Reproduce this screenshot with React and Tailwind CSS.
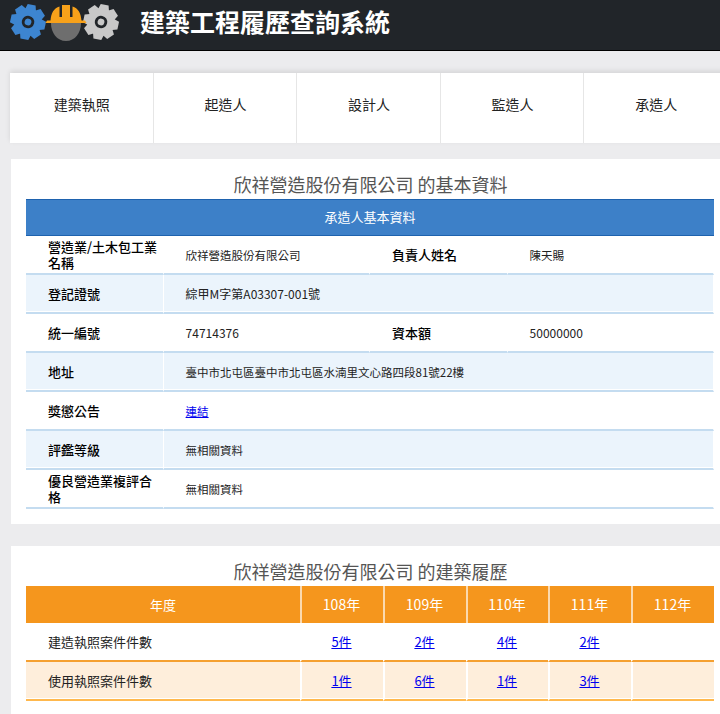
const F = "font-['Microsoft_JhengHei','Noto_Sans_CJK_TC','Noto_Sans',sans-serif]";

function Gear({ color, x }) {
  const teeth = [0, 45, 90, 135, 180, 225, 270, 315];
  return (
    <g transform={`translate(${x} 22) rotate(12)`}>
      {teeth.map((a) => (
        <path key={a} d="M-4 -17.6 L4 -17.6 L6.2 -10 L-6.2 -10 Z" fill={color} transform={`rotate(${a})`} />
      ))}
      <circle r="10" fill="none" stroke={color} strokeWidth="7.5" />
      <circle r="3.4" fill={color} />
    </g>
  );
}

function Logo() {
  return (
    <svg width="120" height="44" viewBox="0 0 120 44" className="block">
      <Gear color="#3d85d0" x="28" />
      <Gear color="#c8c8c8" x="101" />
      <path d="M51 23 h30 c0 10 -6 18 -15 18 s-15 -8 -15 -18 Z" fill="#6e6e6e" />
      <path d="M50.5 21 C51 13 54 8 59.5 6.5 L59.5 17 L62 17 L62 5 L70 5 L70 17 L72.5 17 L72.5 6.5 C78 8 81 13 81.5 21 Z" fill="#f7a11a" />
      <path d="M47 20.5 h38 l1.5 2.5 h-41 Z" fill="#f7a11a" />
    </svg>
  );
}

const blueRows = [
  { l: "營造業/土木包工業名稱", v: "欣祥營造股份有限公司", l2: "負責人姓名", v2: "陳天賜" },
  { l: "登記證號", v: "綜甲M字第A03307-001號", span: true, big: true },
  { l: "統一編號", v: "74714376", l2: "資本額", v2: "50000000", big: true },
  { l: "地址", v: "臺中市北屯區臺中市北屯區水湳里文心路四段81號22樓", span: true },
  { l: "獎懲公告", link: "連結", span: true },
  { l: "評鑑等級", v: "無相關資料", span: true },
  { l: "優良營造業複評合格", v: "無相關資料", span: true },
];

const years = ["108年", "109年", "110年", "111年", "112年"];
const caseRows = [
  { l: "建造執照案件件數", c: ["5件", "2件", "4件", "2件", ""] },
  { l: "使用執照案件件數", c: ["1件", "6件", "1件", "3件", ""] },
];

const nav = ["建築執照", "起造人", "設計人", "監造人", "承造人"];

function Label({ children, tint }) {
  return (
    <td className={`pl-[22px] pr-[4px] text-[13px] leading-[16px] font-medium text-black border-r border-r-white border-b-2 border-b-[#c4dcf0] ${tint ? "shadow-[inset_0_-1px_0_#ffffff]" : ""}`}>
      {children}
    </td>
  );
}

function Value({ children, span, big, tint }) {
  return (
    <td colSpan={span ? 3 : 1} className={`pl-[22px] pr-[4px] leading-[16px] text-[#222] border-r border-r-white border-b-2 border-b-[#c4dcf0] ${big ? "text-[12px]" : "text-[11.5px]"} ${tint ? "shadow-[inset_0_-1px_0_#ffffff]" : ""}`}>
      {children}
    </td>
  );
}

export default function App() {
  return (
    <div className={`h-[714px] w-[720px] overflow-hidden bg-[#ececee] ${F}`}>
      <header className="flex h-[51px] items-start overflow-hidden border-b border-b-black bg-[#212529]">
        <div className="w-[120px] shrink-0">
          <Logo />
        </div>
        <h1 className="ml-[20px] mt-[5px] text-[25px] leading-[32px] font-bold text-white">建築工程履歷查詢系統</h1>
      </header>

      <nav className="ml-[10px] mt-[22px] flex h-[70px] w-[718px] bg-white shadow-[0_-2px_5px_rgba(0,0,0,0.1)]">
        {nav.map((n) => (
          <div key={n} className="flex w-[143.6px] shrink-0 items-center justify-center border-r border-r-[#e6e6e6] pb-[8px] pl-[1px] text-[14px] text-[#222]">
            {n}
          </div>
        ))}
      </nav>

      <section className="ml-[11px] mt-[16px] h-[365px] bg-white pl-[15px] pr-[6px]">
        <h2 className="h-[40px] pt-[13px] pl-[1px] text-center text-[18px] leading-[24px] text-[#555]">欣祥營造股份有限公司 的基本資料</h2>
        <div className="flex h-[37px] items-center justify-center border-y border-y-[#1e62ae] bg-[#3d80c8] pb-[2px] text-[13px] text-white">
          承造人基本資料
        </div>
        <table className="w-full table-fixed border-separate border-spacing-0">
          <colgroup>
            <col className="w-[20%]" />
            <col className="w-[30%]" />
            <col className="w-[20%]" />
            <col className="w-[30%]" />
          </colgroup>
          <tbody>
            {blueRows.map((r, i) => (
              <tr key={r.l} className={`h-[39px] ${i % 2 ? "bg-[#ebf4fc]" : "bg-white"}`}>
                <Label tint={i % 2 === 1}>{r.l}</Label>
                <Value span={r.span} big={r.big} tint={i % 2 === 1}>
                  {r.link ? <a href="#" className="text-[#0000ee] underline">{r.link}</a> : r.v}
                </Value>
                {!r.span && <Label tint={i % 2 === 1}>{r.l2}</Label>}
                {!r.span && <Value big={r.big} tint={i % 2 === 1}>{r.v2}</Value>}
              </tr>
            ))}
          </tbody>
        </table>
      </section>

      <section className="ml-[11px] mt-[22px] bg-white pl-[15px] pr-[6px] pb-[20px]">
        <h2 className="h-[40px] pt-[13px] pl-[1px] text-center text-[18px] leading-[24px] text-[#555]">欣祥營造股份有限公司 的建築履歷</h2>
        <table className="w-full table-fixed border-separate border-spacing-0">
          <colgroup>
            <col className="w-[274px]" />
            <col className="w-[83px]" />
            <col className="w-[83px]" />
            <col className="w-[82px]" />
            <col className="w-[83px]" />
            <col className="w-[83px]" />
          </colgroup>
          <thead>
            <tr className="h-[37px] bg-[#f5961d] text-white">
              <th className="text-[13px] font-normal">年度</th>
              {years.map((y) => (
                <th key={y} className="border-l-2 border-l-[#fbd9ae] pr-[2px] text-[14px] font-normal">{y}</th>
              ))}
            </tr>
          </thead>
          <tbody>
            {caseRows.map((r, i) => (
              <tr key={r.l} className={`h-[39px] ${i ? "bg-[#feeedb]" : "bg-white"}`}>
                <td className={`border-b-2 pl-[22px] text-[13px] text-[#222] ${i ? "border-b-[#ffb84d] shadow-[inset_0_-1px_0_#ffffff]" : "border-b-[#f5a030]"}`}>{r.l}</td>
                {r.c.map((c, j) => (
                  <td key={j} className={`border-l-2 border-l-white border-b-2 pr-[2px] text-center text-[13px] ${i ? "border-b-[#ffb84d] shadow-[inset_0_-1px_0_#ffffff]" : "border-b-[#f5a030]"}`}>
                    {c && <a href="#" className="text-[#0000ee] underline">{c}</a>}
                  </td>
                ))}
              </tr>
            ))}
          </tbody>
        </table>
      </section>
    </div>
  );
}
